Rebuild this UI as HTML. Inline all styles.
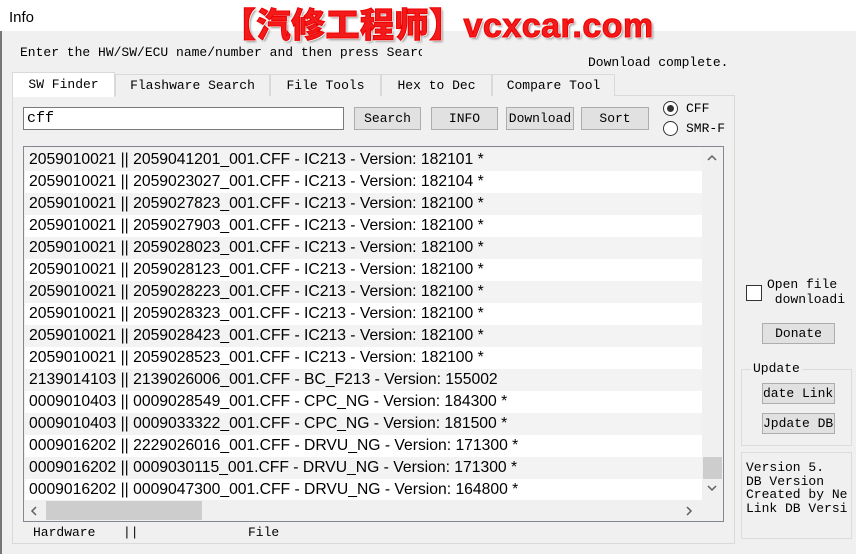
<!DOCTYPE html>
<html><head><meta charset="utf-8"><style>
*{box-sizing:border-box;margin:0;padding:0}
body{width:856px;height:554px;overflow:hidden;background:#f0f0f0;position:relative;font-family:"Liberation Mono","Noto Sans CJK SC",monospace;font-size:13px;color:#000}
.a{position:absolute}
.btn{position:absolute;background:#e1e1e1;border:1px solid #adadad;text-align:center;font-size:13px;line-height:21px;white-space:nowrap;overflow:hidden}
.tab{position:absolute;top:74px;height:22px;border:1px solid #d9d9d9;border-bottom:none;background:#f0f0f0;font-size:13px;line-height:21px;text-align:center}
.row{height:22px;line-height:22px;padding-left:4px;font-family:"Liberation Sans",sans-serif;font-size:15.7px;white-space:nowrap;color:#000}
.row:nth-child(odd){background:#f3f3f3}
.row:nth-child(even){background:#fff}
</style></head><body>
<div class="a" style="left:0;top:0;width:856px;height:31px;background:#fff"></div>
<div class="a" style="left:0;top:31px;width:2px;height:523px;background:#777"></div>
<div class="a" style="left:9px;top:9px;font-family:'Liberation Sans',sans-serif;font-size:15px">Info</div>
<div class="a" style="left:222px;top:-2px;font-family:'Liberation Sans','Noto Sans CJK SC',sans-serif;font-weight:900;font-size:34px;color:#f21a1a;letter-spacing:0.5px;-webkit-text-stroke:1px #e00;text-shadow:1px 1px 0 #fff,-1px -1px 0 #fff,2px 2px 2px #999;white-space:nowrap">【汽修工程师】vcxcar.com</div>
<div class="a" style="left:20px;top:45px;white-space:nowrap;width:402px;overflow:hidden">Enter the HW/SW/ECU name/number and then press Search:</div>
<div class="a" style="left:588px;top:55px">Download complete.</div>
<div class="a" style="left:12px;top:95px;width:723px;height:449px;border:1px solid #d9d9d9;background:#f0f0f0"></div>
<div class="tab" style="left:12px;top:72px;width:103px;height:25px;background:#fff;border-color:#d9d9d9;z-index:2;line-height:24px">SW Finder</div>
<div class="tab" style="left:115px;width:155px">Flashware Search</div>
<div class="tab" style="left:270px;width:111px">File Tools</div>
<div class="tab" style="left:381px;width:111px">Hex to Dec</div>
<div class="tab" style="left:492px;width:123px">Compare Tool</div>
<div class="a" style="left:23px;top:107px;width:321px;height:23px;border:1px solid #7a7a7a;background:#fff;padding-left:3px;line-height:21px;font-size:15px">cff</div>
<div class="btn" style="left:354px;top:107px;width:67px;height:23px">Search</div>
<div class="btn" style="left:431px;top:107px;width:67px;height:23px">INFO</div>
<div class="btn" style="left:506px;top:107px;width:68px;height:23px">Download</div>
<div class="btn" style="left:581px;top:107px;width:68px;height:23px">Sort</div>
<div class="a" style="left:663px;top:101px;width:15px;height:15px;border:1px solid #333;border-radius:50%;background:#fff"><div style="margin:3px;width:7px;height:7px;border-radius:50%;background:#333"></div></div>
<div class="a" style="left:686px;top:101px">CFF</div>
<div class="a" style="left:663px;top:121px;width:15px;height:15px;border:1px solid #333;border-radius:50%;background:#fff"></div>
<div class="a" style="left:686px;top:121px">SMR-F</div>
<div class="a" style="left:23px;top:146px;width:701px;height:376px;border:1px solid #828790;background:#f0f0f0;overflow:hidden">
<div style="position:absolute;left:1px;top:2px;width:677px;height:351px;overflow:hidden">
<div class="row">2059010021 || 2059041201_001.CFF - IC213 - Version: 182101 *</div>
<div class="row">2059010021 || 2059023027_001.CFF - IC213 - Version: 182104 *</div>
<div class="row">2059010021 || 2059027823_001.CFF - IC213 - Version: 182100 *</div>
<div class="row">2059010021 || 2059027903_001.CFF - IC213 - Version: 182100 *</div>
<div class="row">2059010021 || 2059028023_001.CFF - IC213 - Version: 182100 *</div>
<div class="row">2059010021 || 2059028123_001.CFF - IC213 - Version: 182100 *</div>
<div class="row">2059010021 || 2059028223_001.CFF - IC213 - Version: 182100 *</div>
<div class="row">2059010021 || 2059028323_001.CFF - IC213 - Version: 182100 *</div>
<div class="row">2059010021 || 2059028423_001.CFF - IC213 - Version: 182100 *</div>
<div class="row">2059010021 || 2059028523_001.CFF - IC213 - Version: 182100 *</div>
<div class="row">2139014103 || 2139026006_001.CFF - BC_F213 - Version: 155002</div>
<div class="row">0009010403 || 0009028549_001.CFF - CPC_NG - Version: 184300 *</div>
<div class="row">0009010403 || 0009033322_001.CFF - CPC_NG - Version: 181500 *</div>
<div class="row">0009016202 || 2229026016_001.CFF - DRVU_NG - Version: 171300 *</div>
<div class="row">0009016202 || 0009030115_001.CFF - DRVU_NG - Version: 171300 *</div>
<div class="row">0009016202 || 0009047300_001.CFF - DRVU_NG - Version: 164800 *</div>
</div>
<div style="position:absolute;left:678px;top:1px;width:21px;height:352px;background:#f0f0f0"></div>
<div style="position:absolute;left:679px;top:310px;width:19px;height:22px;background:#cdcdcd"></div>
<svg style="position:absolute;left:682px;top:6px" width="12" height="10"><path d="M2 7 L6 3 L10 7" stroke="#606060" stroke-width="1.5" fill="none"/></svg>
<svg style="position:absolute;left:682px;top:336px" width="12" height="10"><path d="M2 3 L6 7 L10 3" stroke="#606060" stroke-width="1.5" fill="none"/></svg>
<div style="position:absolute;left:1px;top:353px;width:677px;height:21px;background:#f0f0f0"></div>
<div style="position:absolute;left:22px;top:354px;width:156px;height:19px;background:#cdcdcd"></div>
<svg style="position:absolute;left:5px;top:358px" width="10" height="12"><path d="M7 2 L3 6 L7 10" stroke="#606060" stroke-width="1.5" fill="none"/></svg>
<svg style="position:absolute;left:660px;top:358px" width="10" height="12"><path d="M3 2 L7 6 L3 10" stroke="#606060" stroke-width="1.5" fill="none"/></svg>
</div>
<div class="a" style="left:33px;top:525px;white-space:pre">Hardware</div>
<div class="a" style="left:123px;top:525px;white-space:pre">||</div>
<div class="a" style="left:248px;top:525px;white-space:pre">File</div>
<div class="a" style="left:746px;top:285px;width:16px;height:16px;border:1px solid #333;background:#fff"></div>
<div class="a" style="left:767px;top:277px;line-height:15px;white-space:pre">Open file
 downloadi</div>
<div class="btn" style="left:762px;top:323px;width:73px;height:21px;line-height:19px">Donate</div>
<div class="a" style="left:741px;top:369px;width:111px;height:77px;border:1px solid #dcdcdc"></div>
<div class="a" style="left:751px;top:361px;background:#f0f0f0;padding:0 2px">Update</div>
<div class="btn" style="left:762px;top:383px;width:73px;height:21px;line-height:19px;text-align:right;padding-right:1px">date Link</div>
<div class="btn" style="left:762px;top:413px;width:73px;height:21px;line-height:19px;text-align:left">Jpdate DB</div>
<div class="a" style="left:741px;top:452px;width:111px;height:87px;border:1px solid #dcdcdc;padding:8px 0 0 4px;font-size:13px;line-height:13.5px;white-space:pre;overflow:hidden">Version 5.
DB Version
Created by Ne
Link DB Versi</div>
</body></html>
